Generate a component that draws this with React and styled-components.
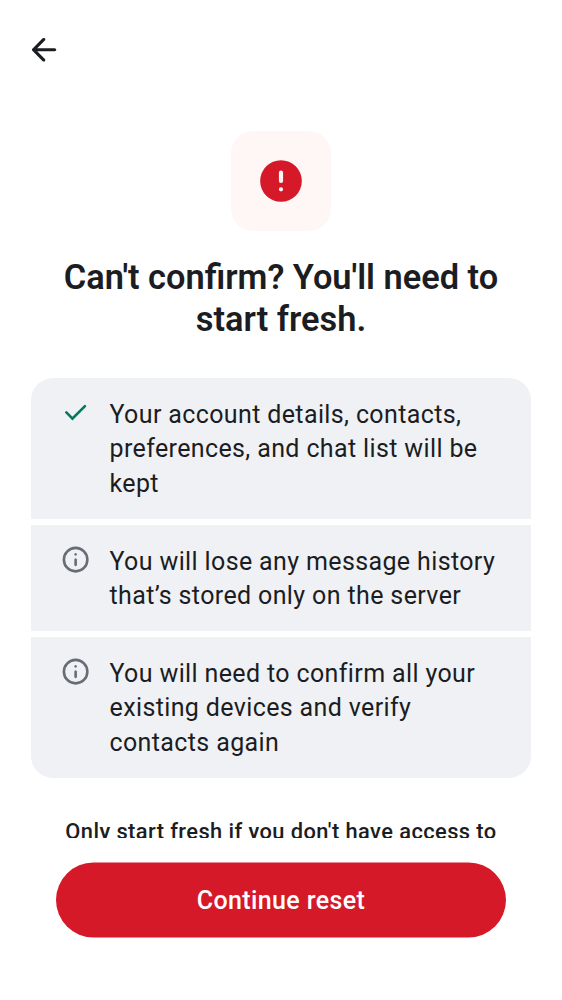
import React from 'react';
import styled, { createGlobalStyle } from 'styled-components';

const Global = createGlobalStyle`
  * { box-sizing: border-box; }
  body { margin: 0; background: #fff; font-family: Roboto, sans-serif; color: #1b1d22; }
`;
const Screen = styled.main`
  height: 1000px; display: flex; flex-direction: column; overflow: hidden;
`;
const TopBar = styled.header`
  height: 100px; flex: none; padding: 31px 0 0 24.6px;
`;
const BackButton = styled.button`
  display: block; width: 37.5px; height: 37.5px; padding: 0; border: 0; background: none; color: #1b1d22;
`;
const Icon = styled.svg`
  display: block; width: ${p => p.$size}px; height: ${p => p.$size}px; fill: currentColor;
`;
const Content = styled.section`
  height: 737.5px; flex: none; overflow: hidden; padding: 31px 31px 0;
  display: flex; flex-direction: column; align-items: center;
`;
const Hero = styled.div`
  width: 100px; height: 100px; flex: none; border-radius: 22px; background: #fff7f6; color: #d51928;
  display: grid; place-items: center;
`;
const Title = styled.h1`
  margin: 25px 0 0; font-size: 34.375px; line-height: 42px; font-weight: 600; text-align: center; white-space: nowrap;
`;
const List = styled.ul`
  list-style: none; margin: 38px 0 0; padding: 0; width: 500px; flex: none;
  display: flex; flex-direction: column; gap: 6.25px; border-radius: 22px; overflow: hidden;
`;
const Item = styled.li`
  display: flex; gap: 18.6px; height: ${p => p.$height}px; padding: 19.7px 0 0 28.7px; background: #f0f1f5;
  font-size: 25px; line-height: 34.4px; letter-spacing: 0.37px; white-space: nowrap;
`;
const Mark = styled.span`
  margin-top: -0.9px; color: ${p => p.$color};
`;
const Note = styled.p`
  margin: 38px 0 0; font-size: 21.875px; line-height: 31px; font-weight: 500; letter-spacing: 0.42px; white-space: nowrap;
`;
const Footer = styled.footer`
  padding: 25.5px 56px 0;
`;
const Button = styled.button`
  display: block; width: 450px; height: 75px; border: 0; border-radius: 38px; padding: 1px 0 0;
  background: #d51928; color: #fff; font: 500 25px/34px Roboto, sans-serif; letter-spacing: 0.39px;
  transform: translateY(-0.5px);
`;
const Info = () => (
  <Icon $size={31.25} viewBox="0 0 24 24">
    <path d="M11.288 16.713A.97.97 0 0 0 12 17a.97.97 0 0 0 .713-.288A.97.97 0 0 0 13 16v-4a.97.97 0 0 0-.287-.713A.97.97 0 0 0 12 11a.97.97 0 0 0-.713.287A.97.97 0 0 0 11 12v4q0 .424.288.713m0-8A.97.97 0 0 0 12 9a.97.97 0 0 0 .713-.287A.97.97 0 0 0 13 8a.97.97 0 0 0-.287-.713A.97.97 0 0 0 12 7a.97.97 0 0 0-.713.287A.97.97 0 0 0 11 8q0 .424.288.713" />
    <path fillRule="evenodd" d="M12 22a10 10 0 1 1 0-20 10 10 0 0 1 0 20m0-2a8 8 0 1 0 0-16 8 8 0 0 0 0 16" />
  </Icon>
);
const Check = () => (
  <Icon $size={31.25} viewBox="0 0 24 24">
    <path d="m9.55 17.975 10.3-10.3a.95.95 0 0 0 0-1.4.95.95 0 0 0-1.4 0l-8.9 8.9-4-4a.95.95 0 0 0-1.4 0 .95.95 0 0 0 0 1.4z" />
  </Icon>
);

export default function App() {
  return (
    <Screen>
      <Global />
      <TopBar>
        <BackButton aria-label="Back">
          <Icon $size={37.5} viewBox="0 0 24 24">
            <path d="m7.825 13 4.9 4.9q.3.3.288.7-.012.4-.313.7-.3.275-.7.288-.4.012-.7-.288l-6.6-6.6q-.15-.15-.213-.325A1.1 1.1 0 0 1 4.425 12q0-.2.062-.375.063-.175.213-.325l6.6-6.6q.275-.275.687-.275.412 0 .713.275.3.3.3.713 0 .412-.3.712L7.825 11H19q.425 0 .712.287.288.288.288.713t-.288.712A.96.96 0 0 1 19 13z" />
          </Icon>
        </BackButton>
      </TopBar>
      <Content>
        <Hero>
          <Icon $size={50} viewBox="0 0 24 24">
            <path fillRule="evenodd" d="M12 22a10 10 0 1 1 0-20 10 10 0 0 1 0 20m0-5a1 1 0 1 0 0-2 1 1 0 0 0 0 2m-1-5a1 1 0 0 0 2 0V8a1 1 0 0 0-2 0z" />
          </Icon>
        </Hero>
        <Title>Can't confirm? You'll need to<br />start fresh.</Title>
        <List>
          <Item $height={140.6}><Mark $color="#007a61"><Check /></Mark><span>Your account details, contacts,<br />preferences, and chat list will be<br />kept</span></Item>
          <Item $height={106.25}><Mark $color="#656d77"><Info /></Mark><span>You will lose any message history<br />that’s stored only on the server</span></Item>
          <Item $height={140.6}><Mark $color="#656d77"><Info /></Mark><span>You will need to confirm all your<br />existing devices and verify<br />contacts again</span></Item>
        </List>
        <Note>Only start fresh if you don't have access to</Note>
      </Content>
      <Footer><Button>Continue reset</Button></Footer>
    </Screen>
  );
}
